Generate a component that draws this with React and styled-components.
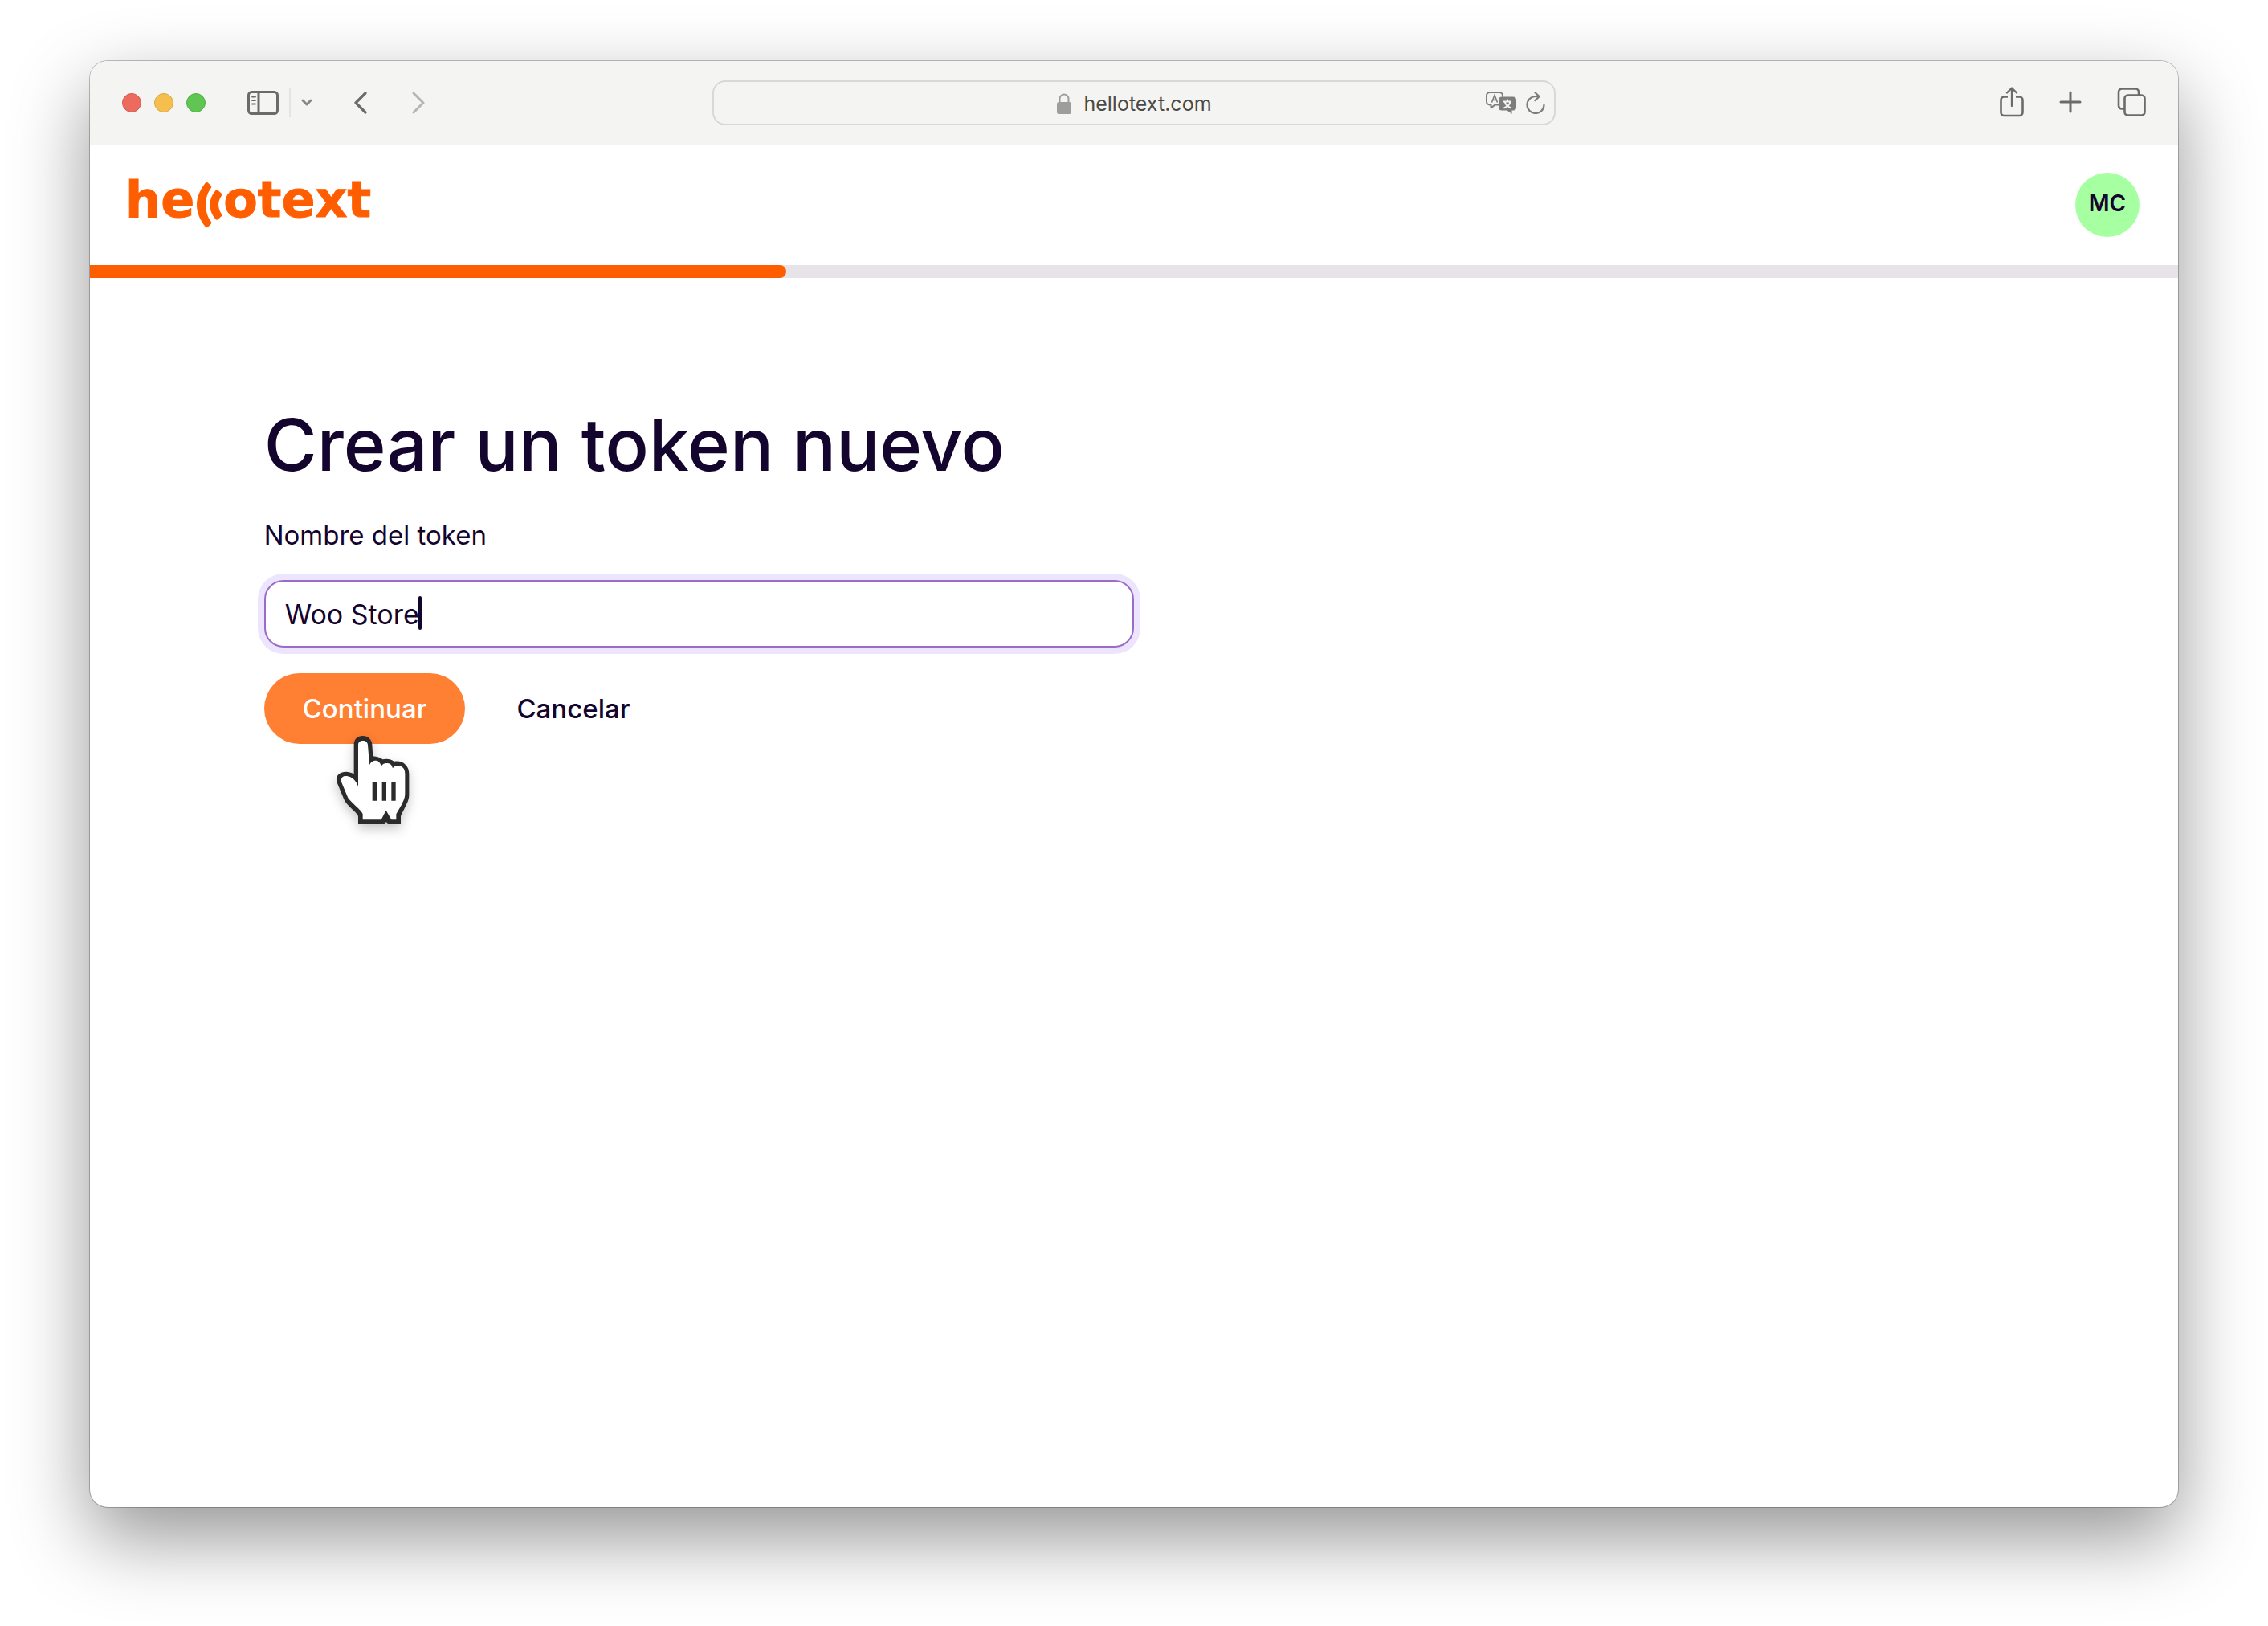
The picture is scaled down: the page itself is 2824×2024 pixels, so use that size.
import React, { useState } from "react";
import styled, { createGlobalStyle, css } from "styled-components";

const GlobalStyle = createGlobalStyle`
  *, *::before, *::after { box-sizing: border-box; }
  html, body, #root { height: 100%; }
  body {
    margin: 0;
    background: #fff;
    color: #14052e;
    font-family: Inter, "Liberation Sans", sans-serif;
    font-size: 33px;
    line-height: 40px;
  }
  button, input { font: inherit; color: inherit; margin: 0; }
  svg { display: block; flex: none; }
`;

const Desktop = styled.div`
  display: flex;
  min-height: 100%;
  padding: 76px 112px 148px;
`;

const BrowserWindow = styled.div`
  flex: 1;
  display: flex;
  flex-direction: column;
  overflow: hidden;
  border-radius: 22px;
  background: #fff;
  box-shadow: 0 0 0 1px rgba(0, 0, 0, 0.24), 0 38px 96px rgba(0, 0, 0, 0.42);
`;

const Toolbar = styled.div`
  display: grid;
  grid-template-columns: 1fr minmax(0, 1050px) 1fr;
  align-items: center;
  height: 105px;
  padding: 0 40px;
  border-bottom: 1px solid #d3d3d2;
  background: #f4f4f2;
  color: #6b6b69;
`;

const ToolGroup = styled.div`
  display: flex;
  align-items: center;
  justify-content: ${(p) => (p.$end ? "flex-end" : "flex-start")};
  gap: ${(p) => p.$gap || 0}px;
  margin-left: ${(p) => p.$before || 0}px;
`;

const Light = styled.span`
  width: 24px;
  height: 24px;
  border-radius: 50%;
  background: ${(p) => p.$color};
  border: 1px solid ${(p) => p.$edge};
`;

const IconButton = styled.button`
  display: flex;
  align-items: center;
  padding: 0;
  border: 0;
  background: none;
  cursor: pointer;
  &:disabled { color: #b5b5b3; }
`;

const Divider = styled.span`
  width: 2px;
  height: 36px;
  background: #e4e4e3;
`;

const AddressBar = styled.div`
  display: grid;
  grid-template-columns: 1fr auto 1fr;
  align-items: center;
  height: 56px;
  padding: 0 11px;
  border: 2px solid #d8d8d6;
  border-radius: 16px;
  color: #7d7d7b;
`;

const Site = styled.div`
  grid-column: 2;
  display: flex;
  align-items: center;
  gap: 14px;
  padding-top: 2px;
  font-size: 25px;
  line-height: 32px;
  color: #4a4a49;
`;

const Header = styled.header`
  display: flex;
  align-items: center;
  justify-content: space-between;
  padding: 34px 48px 35px 44px;
`;

const Logo = styled.a`
  display: flex;
  align-items: center;
  gap: 2px;
  color: #ff5e00;
  font-family: "DejaVu Sans", sans-serif;
  font-weight: 700;
  font-size: 62px;
  line-height: 64px;
  text-decoration: none;
`;

const LogoText = styled.span`
  padding-bottom: 12px;
  -webkit-text-stroke: 1px currentColor;
`;

const Avatar = styled.button`
  width: 80px;
  height: 80px;
  padding: 0 0 4px;
  border: 0;
  border-radius: 50%;
  background: #a6ffa1;
  color: #14052e;
  font-size: 28px;
  font-weight: 600;
`;

const Track = styled.div`
  height: 16px;
  background: #e6e4e9;
`;

const Progress = styled.div`
  width: calc(100% / 3);
  height: 100%;
  border-radius: 0 8px 8px 0;
  background: #ff5e00;
`;

const Main = styled.main`
  display: grid;
  grid-template-columns: repeat(12, 1fr);
  padding: 160px 0;
`;

const Form = styled.form`
  grid-column: 2 / span 5;
  display: flex;
  flex-direction: column;
`;

const Title = styled.h1`
  margin: 0 0 44px;
  font-size: 90px;
  line-height: 96px;
  font-weight: 500;
  white-space: nowrap;
`;

const Label = styled.label`
  margin-bottom: 36px;
`;

const Field = styled.div`
  position: relative;
  display: flex;
  margin-bottom: 32px;
`;

const Input = styled.input`
  flex: 1;
  min-width: 0;
  height: 84px;
  padding: 0 24px;
  border: 2px solid #9a6cc6;
  border-radius: 24px;
  outline: none;
  background: #fff;
  box-shadow: 0 0 0 8px #ede5fe;
  font-size: 34px;
  caret-color: transparent;
`;

const Caret = styled.span`
  position: absolute;
  left: 192px;
  top: 20px;
  width: 4px;
  height: 42px;
  border-radius: 2px;
  background: #14052e;
`;

const Actions = styled.div`
  display: flex;
  gap: 16px;
`;

const Button = styled.button`
  position: relative;
  height: 88px;
  padding: 0 48px;
  border: 0;
  border-radius: 44px;
  background: none;
  font-weight: 500;
  cursor: pointer;
  ${(p) => p.$primary && css`
    background: #ff7f33;
    color: #fff;
  `}
`;

const Pointer = styled.svg`
  position: absolute;
  left: 71px;
  top: 62px;
  overflow: visible;
  pointer-events: none;
  filter: drop-shadow(0 6px 7px rgba(0, 0, 0, 0.22));
`;

const Icon = ({ w, h, sw = 3, children }) => (
  <svg width={w} height={h} viewBox={`0 0 ${w} ${h}`} fill="none" stroke="currentColor"
    strokeWidth={sw} strokeLinecap="round" strokeLinejoin="round" aria-hidden="true">
    {children}
  </svg>
);

const BrowserToolbar = () => (
  <Toolbar>
    <ToolGroup>
      <ToolGroup $gap={16}>
        <Light $color="#ec6a5e" $edge="#d9584d" />
        <Light $color="#f4bf4f" $edge="#dca73c" />
        <Light $color="#61c554" $edge="#50ad44" />
      </ToolGroup>
      <ToolGroup $before={52} $gap={13}>
        <IconButton type="button" aria-label="Barra lateral">
          <Icon w={39} h={30}>
            <rect x="1.5" y="1.5" width="36" height="27" rx="4" />
            <path d="M14 1.5v27" />
            <path d="M6 7.5h4M6 12h4M6 16.5h4" strokeWidth="1.8" />
          </Icon>
        </IconButton>
        <Divider />
        <IconButton type="button" aria-label="Grupos de pestañas">
          <Icon w={14} h={10}><path d="M2 2l5 5 5-5" stroke="#878785" /></Icon>
        </IconButton>
      </ToolGroup>
      <ToolGroup $before={52} $gap={56}>
        <IconButton type="button" aria-label="Atrás">
          <Icon w={16} h={28} sw={3.2}><path d="M14 2L2 14l12 12" /></Icon>
        </IconButton>
        <IconButton type="button" aria-label="Adelante" disabled>
          <Icon w={16} h={28}><path d="M2 2l12 12L2 26" /></Icon>
        </IconButton>
      </ToolGroup>
    </ToolGroup>

    <AddressBar>
      <Site>
        <svg width="20" height="26" viewBox="0 0 20 26" aria-hidden="true">
          <path d="M4.500 12V7a5.500 5.500 0 0 1 11 0v5" fill="none" stroke="#9d9d9b" strokeWidth="2" />
          <rect x="1" y="11" width="18" height="15" rx="2.5" fill="#9d9d9b" />
        </svg>
        <span>hellotext.com</span>
      </Site>
      <ToolGroup $end $gap={12}>
        <IconButton type="button" aria-label="Traducir">
          <svg width="38" height="28" viewBox="0 0 38 28" fill="none" aria-hidden="true">
            <path d="M16 16.5h-4.500l-5 4v-4H5A4 4 0 0 1 1 12.500V5a4 4 0 0 1 4-4h12a4 4 0 0 1 4 4v1"
              stroke="currentColor" strokeWidth="2" strokeLinecap="round" strokeLinejoin="round" />
            <path d="M7.500 13.500L11 4.500l3.500 9M8.700 10.500h4.600" stroke="currentColor" strokeWidth="1.700" />
            <path d="M20 6.500h14a4 4 0 0 1 4 4v9a4 4 0 0 1-4 4h-1.500V28l-6-4.500H20a4 4 0 0 1-4-4v-9a4 4 0 0 1 4-4z" fill="currentColor" />
            <path d="M22 12.500h10M27 9.500v3M30.500 13c-1 4-4 6-8 7.500M23.800 13c1 4 4 6 7.700 7.500" stroke="#f4f4f2" strokeWidth="2" />
          </svg>
        </IconButton>
        <IconButton type="button" aria-label="Recargar">
          <Icon w={24} h={28} sw={2.2}>
            <path d="M22.500 16.500A10.500 10.500 0 1 1 12 6h4.500" />
            <path d="M11.500 1.200l5 4.900-5 5" />
          </Icon>
        </IconButton>
      </ToolGroup>
    </AddressBar>

    <ToolGroup $end $gap={44}>
      <IconButton type="button" aria-label="Compartir">
        <Icon w={30} h={40} sw={2.6}>
          <path d="M10 12.500H5.500a4 4 0 0 0-4 4V32a4 4 0 0 0 4 4h19a4 4 0 0 0 4-4V16.500a4 4 0 0 0-4-4H20" strokeLinecap="butt" />
          <path d="M15 24V2M9 7.500L15 1.500l6 6" strokeWidth="2.300" />
        </Icon>
      </IconButton>
      <IconButton type="button" aria-label="Pestaña nueva">
        <Icon w={28} h={30}><path d="M14 2v24M2 14h24" /></Icon>
      </IconButton>
      <IconButton type="button" aria-label="Mostrar pestañas">
        <Icon w={36} h={38} sw={2.6}>
          <rect x="9.500" y="9.500" width="25" height="25" rx="4" />
          <path d="M9 26.500H6a4 4 0 0 1-4-4V5.500a4 4 0 0 1 4-4h17a4 4 0 0 1 4 4v3.500" strokeLinecap="butt" />
        </Icon>
      </IconButton>
    </ToolGroup>
  </Toolbar>
);

const Hand = () => (
  <Pointer width="130" height="150" viewBox="0 0 390 450" aria-hidden="true">
    <path
      d="M122 190V82C122 60 135 48 155 48C175 48 189 62 190 80L193 124C208 125 220 129 230 136C245 132 262 136 272 144C300 138 328 156 328 190V268C328 280 325 290 320 300L297 347V378H248L243 368L236 378H138V347C125 325 98 312 85 285L60 225C45 190 85 170 122 190Z"
      fill="#2b2b2b" />
    <path
      d="M138 237V82C138 70 146 66 156 66C166 66 173 72 174 82L180 157C185 145 195 140 204 140C215 140 221 150 224 161C230 152 238 149 247 150C260 150 264 160 267 169C272 160 282 158 290 159C305 162 313 172 313 190V262C313 285 304 295 300 305L280 340V361H262L242 326L224 361H155V340C150 325 115 300 100 280L75 220C72 200 85 197 95 198C115 200 130 215 138 237Z"
      fill="#fff" />
    <path d="M191 222h16v68h-16zM227 222h16v68h-16zM262 222h16v68h-16z" fill="#2b2b2b" />
  </Pointer>
);

export default function App() {
  const [name, setName] = useState("Woo Store");
  return (
    <>
      <GlobalStyle />
      <Desktop>
        <BrowserWindow>
          <BrowserToolbar />
          <Header>
            <Logo href="#" aria-label="hellotext">
              <LogoText>he</LogoText>
              <svg width="32" height="58" viewBox="0 0 32 58" overflow="visible" aria-hidden="true">
                <g fill="currentColor">
                  <path d="M11.500 2Q13 0 15 1.500L18.500 5Q20 6.500 18.500 8.500C10 20 10 38 18.500 49.500Q20 51 18.500 53L15 56.500Q13 58 11.500 56C-2.500 38-2.500 20 11.500 2Z" />
                  <path d="M24.500 11Q26 9.500 27.500 11L31.500 14.500Q33 16 32 17.500C26.800 25 26.800 33 32 40.500Q33 42 31.500 43.500L27.500 47Q26 48.500 24.500 47C14.900 36 14.900 22 24.500 11Z" />
                </g>
              </svg>
              <LogoText>otext</LogoText>
            </Logo>
            <Avatar type="button">MC</Avatar>
          </Header>
          <Track role="progressbar" aria-label="Progreso" aria-valuenow={1} aria-valuemin={0} aria-valuemax={3}>
            <Progress />
          </Track>
          <Main>
            <Form onSubmit={(e) => e.preventDefault()}>
              <Title>Crear un token nuevo</Title>
              <Label htmlFor="token-name">Nombre del token</Label>
              <Field>
                <Input id="token-name" value={name} onChange={(e) => setName(e.target.value)} />
                <Caret />
              </Field>
              <Actions>
                <Button type="submit" $primary>
                  Continuar
                  <Hand />
                </Button>
                <Button type="button">Cancelar</Button>
              </Actions>
            </Form>
          </Main>
        </BrowserWindow>
      </Desktop>
    </>
  );
}
